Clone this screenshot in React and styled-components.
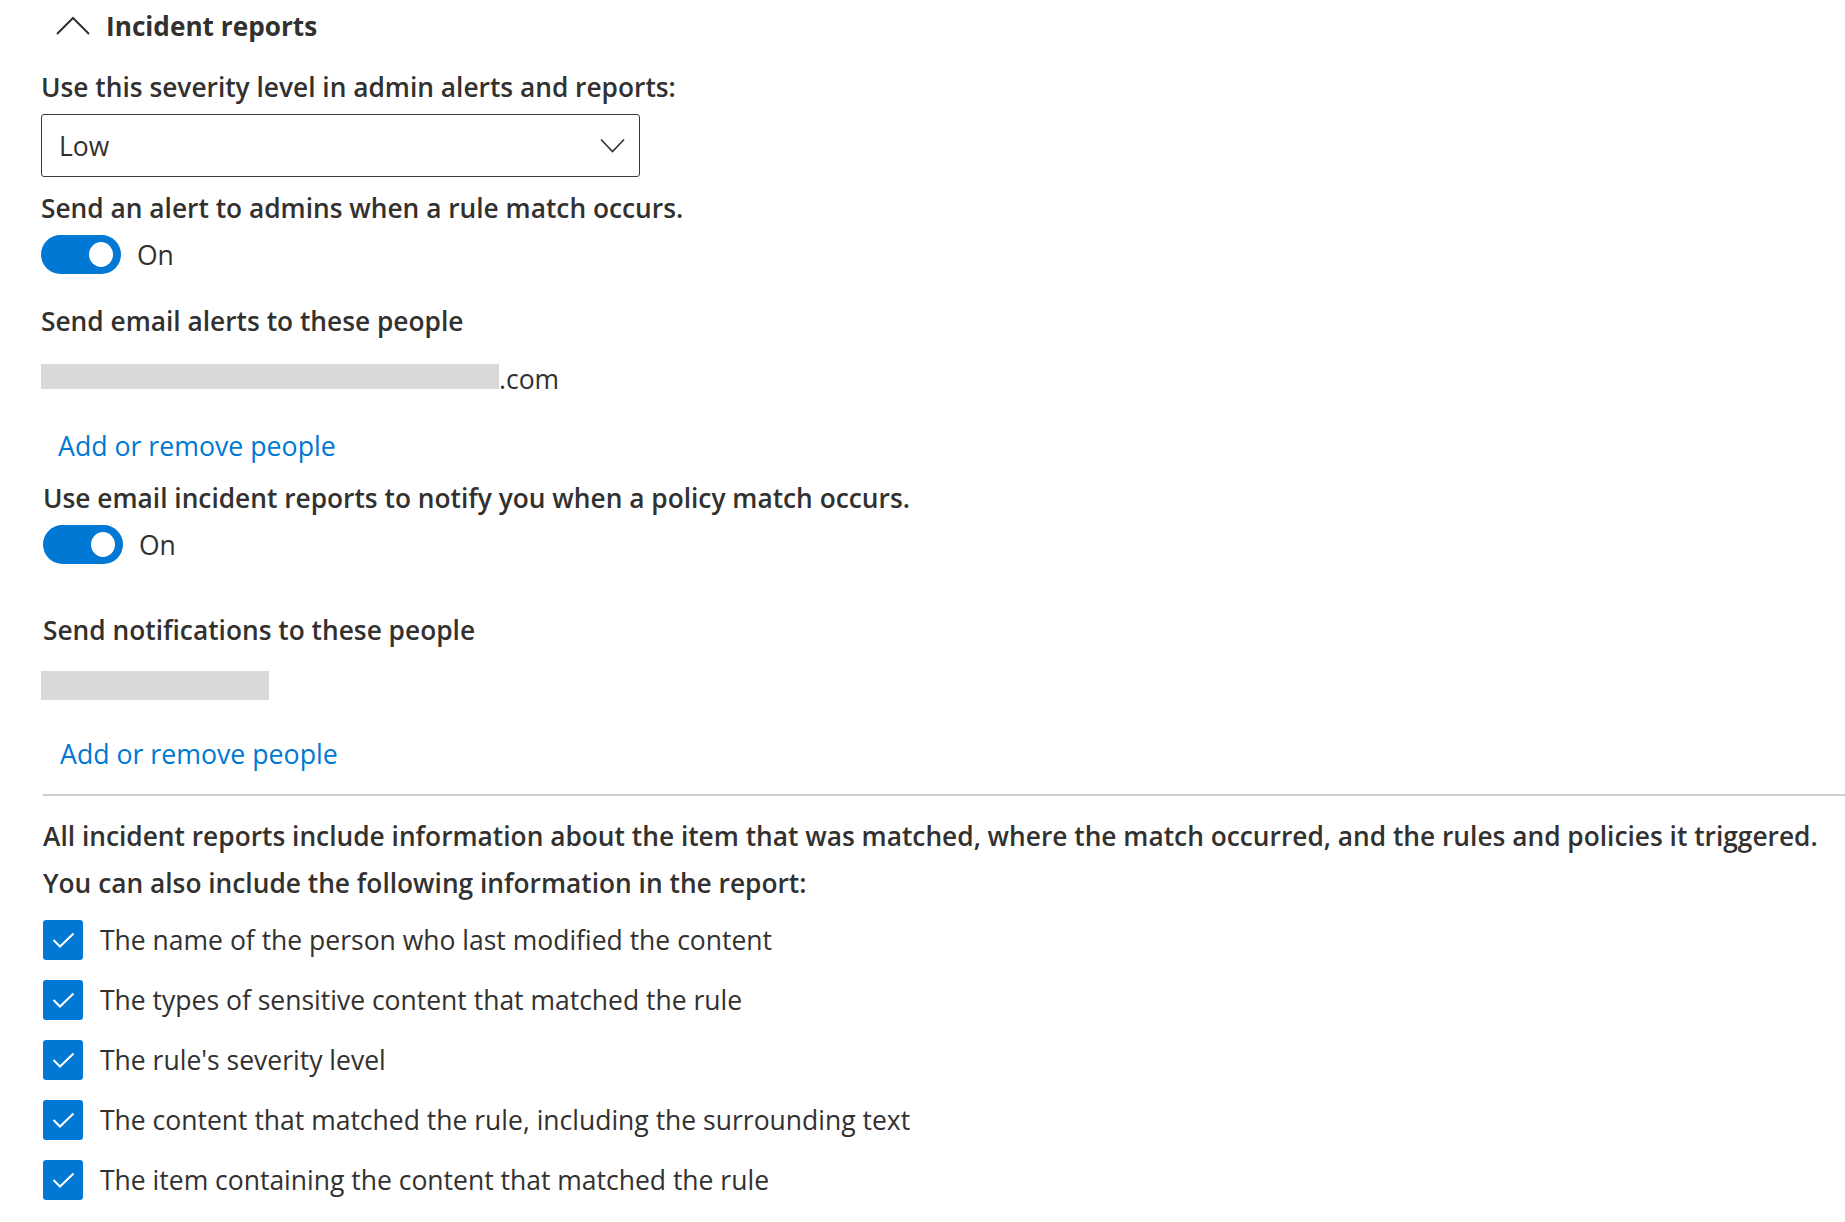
import React from 'react';
import styled, { createGlobalStyle } from 'styled-components';

const GlobalStyle = createGlobalStyle`
  html, body {
    margin: 0;
    padding: 0;
    background: #ffffff;
  }
  body {
    font-family: "Open Sans", "Noto Sans", sans-serif;
    color: #323130;
  }
`;

const Page = styled.div`
  display: flex;
  flex-direction: column;
  padding: 6px 0 40px 41px;
  font-size: 26.5px;
  line-height: 32px;
`;

const Header = styled.div`
  display: flex;
  align-items: center;
  gap: 16px;
  height: 40px;
  padding-left: 15px;
`;

const HeaderTitle = styled.div`
  font-size: 26.2px;
  font-weight: 700;
  color: #323130;
`;

const Label = styled.div`
  margin-top: ${({ $mt }) => $mt || 0}px;
  padding-left: ${({ $indent }) => $indent || 0}px;
  font-size: 26.3px;
  font-weight: 600;
  color: #323130;
  white-space: nowrap;
`;

const Dropdown = styled.div`
  margin-top: 11px;
  width: 599px;
  height: 63px;
  box-sizing: border-box;
  border: 1.4px solid #3b3a39;
  border-radius: 3px;
  display: flex;
  align-items: center;
  justify-content: space-between;
  padding: 0 14px 0 17px;
`;

const ToggleRow = styled.div`
  margin-top: ${({ $mt }) => $mt || 0}px;
  padding-left: ${({ $indent }) => $indent || 0}px;
  display: flex;
  align-items: center;
  gap: 16px;
`;

const Track = styled.div`
  width: 80px;
  height: 39px;
  border-radius: 20px;
  background: #0078d4;
  display: flex;
  align-items: center;
  justify-content: flex-end;
  padding-right: 8px;
  box-sizing: border-box;
`;

const Knob = styled.div`
  width: 24px;
  height: 25px;
  border-radius: 50%;
  background: #ffffff;
`;

const EmailRow = styled.div`
  margin-top: 27px;
  display: flex;
  align-items: center;
  height: 25px;
`;

const Redacted = styled.div`
  width: ${({ $w }) => $w}px;
  height: ${({ $h }) => $h}px;
  background: #d9d9d9;
  margin-top: ${({ $mt }) => $mt || 0}px;
`;

const Domain = styled.span`
  position: relative;
  top: 2px;
`;

const Link = styled.a`
  display: block;
  margin-top: ${({ $mt }) => $mt || 0}px;
  padding-left: ${({ $indent }) => $indent || 0}px;
  font-size: 26.7px;
  color: #0078d4;
  text-decoration: none;
  cursor: pointer;
`;

const Divider = styled.div`
  margin-top: 24px;
  margin-left: 2px;
  height: 2px;
  background: #d2d0ce;
`;

const CheckList = styled.div`
  margin-top: 21px;
  padding-left: 2px;
  display: flex;
  flex-direction: column;
  gap: 20px;
`;

const CheckRow = styled.label`
  display: flex;
  align-items: center;
  gap: 17px;
  height: 40px;
`;

const Box = styled.span`
  width: 40px;
  height: 40px;
  border-radius: 3px;
  background: #0078d4;
  display: flex;
  align-items: center;
  justify-content: center;
  flex-shrink: 0;
`;

const Toggle = ({ mt, indent }) => (
  <ToggleRow $mt={mt} $indent={indent}>
    <Track>
      <Knob />
    </Track>
    <span>On</span>
  </ToggleRow>
);

const items = [
  'The name of the person who last modified the content',
  'The types of sensitive content that matched the rule',
  "The rule's severity level",
  'The content that matched the rule, including the surrounding text',
  'The item containing the content that matched the rule',
];

export default function App() {
  return (
    <>
      <GlobalStyle />
      <Page>
        <Header>
          <svg width="34" height="20" viewBox="0 0 34 20">
            <path d="M1 18 L17 2 L33 18" fill="none" stroke="#323130" strokeWidth="2" />
          </svg>
          <HeaderTitle>Incident reports</HeaderTitle>
        </Header>

        <Label $mt={25}>Use this severity level in admin alerts and reports:</Label>
        <Dropdown>
          <span>Low</span>
          <svg width="25" height="15" viewBox="0 0 25 15">
            <path d="M1 1.5 L12.5 13.5 L24 1.5" fill="none" stroke="#323130" strokeWidth="1.6" />
          </svg>
        </Dropdown>

        <Label $mt={15}>Send an alert to admins when a rule match occurs.</Label>
        <Toggle mt={11} />

        <Label $mt={31}>Send email alerts to these people</Label>
        <EmailRow>
          <Redacted $w={458} $h={25} />
          <Domain>.com</Domain>
        </EmailRow>
        <Link $mt={41} $indent={17}>Add or remove people</Link>

        <Label $mt={20} $indent={2}>Use email incident reports to notify you when a policy match occurs.</Label>
        <Toggle mt={11} indent={2} />

        <Label $mt={50} $indent={2}>Send notifications to these people</Label>
        <Redacted $w={228} $h={29} $mt={25} />
        <Link $mt={38} $indent={19}>Add or remove people</Link>

        <Divider />

        <Label $mt={24} $indent={2}>
          All incident reports include information about the item that was matched, where the match occurred, and the rules and policies it triggered.
        </Label>
        <Label $mt={15} $indent={2}>You can also include the following information in the report:</Label>

        <CheckList>
          {items.map((text) => (
            <CheckRow key={text}>
              <Box>
                <svg width="23" height="16" viewBox="0 0 23 16">
                  <path d="M1.5 8 L8 14.5 L21.5 1.5" fill="none" stroke="#ffffff" strokeWidth="2" />
                </svg>
              </Box>
              <span>{text}</span>
            </CheckRow>
          ))}
        </CheckList>
      </Page>
    </>
  );
}
